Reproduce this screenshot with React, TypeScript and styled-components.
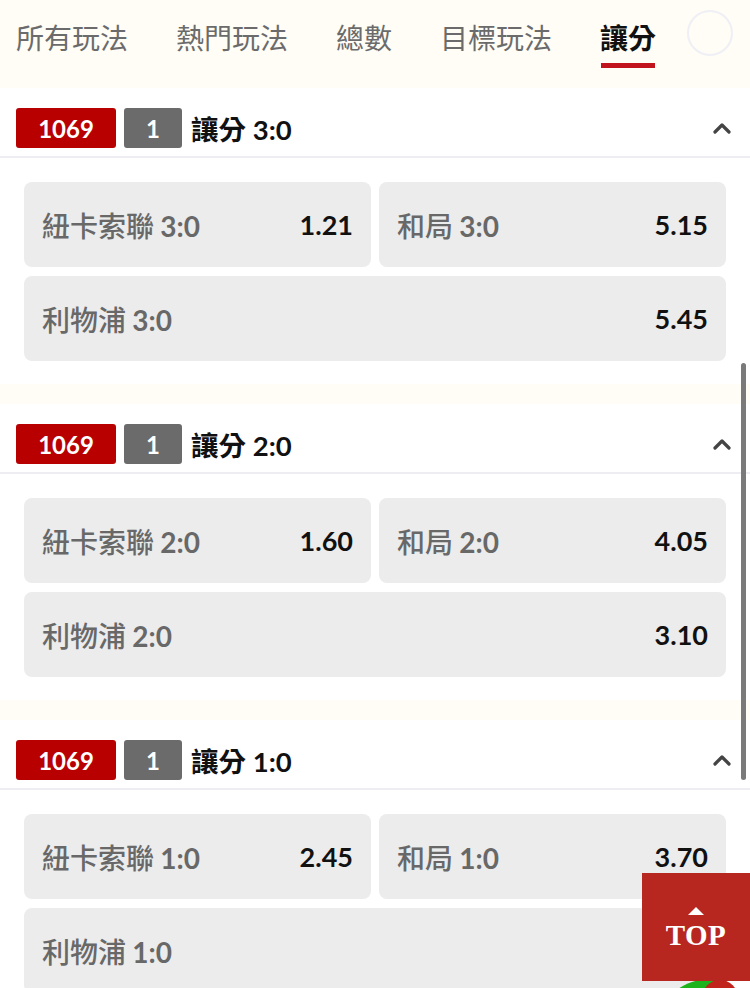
import styled, { createGlobalStyle } from "styled-components";

const GlobalStyle = createGlobalStyle`
  html, body {
    margin: 0;
    padding: 0;
    overflow: hidden;
    background: #fffdf5;
  }
  body {
    font-family: "Lato", "Noto Sans CJK TC", sans-serif;
  }
`;

const Page = styled.div`
  width: 750px;
  height: 988px;
  overflow: hidden;
  background: #fffdf5;
`;

const TabBar = styled.nav`
  height: 88px;
  display: flex;
  align-items: flex-start;
  gap: 48px;
  padding-left: 16px;
  box-sizing: border-box;
`;

const Tab = styled.div<{ $active?: boolean }>`
  display: flex;
  flex-direction: column;
  align-items: center;
  padding-top: 19px;
  font-family: "Noto Sans CJK TC", sans-serif;
  font-size: 28px;
  line-height: 36px;
  font-weight: ${(p) => (p.$active ? 700 : 400)};
  color: ${(p) => (p.$active ? "#111" : "#6b6b6b")};
  white-space: nowrap;
`;

const Underline = styled.span`
  width: 54px;
  height: 5px;
  margin-top: 8px;
  background: #c2141c;
`;

const FilterCircle = styled.div`
  width: 42px;
  height: 42px;
  margin-top: 10px;
  margin-left: -17px;
  border: 2px solid #efeff6;
  border-radius: 50%;
`;

const Section = styled.section`
  background: #fff;
  margin-bottom: 20px;
`;

const SectionHeader = styled.div`
  height: 70px;
  box-sizing: border-box;
  display: flex;
  align-items: center;
  padding: 19px 16px 7px 16px;
  border-bottom: 2px solid #eeeef2;
`;

const Badge = styled.span<{ $color: string; $width: number }>`
  display: inline-flex;
  align-items: center;
  justify-content: center;
  width: ${(p) => p.$width}px;
  height: 40px;
  border-radius: 3px;
  background: ${(p) => p.$color};
  color: #fff;
  font-family: "Lato", sans-serif;
  font-size: 24px;
  font-weight: 700;
  margin-right: 8px;
`;

const HeaderTitle = styled.span`
  margin-left: 1px;
  font-size: 27.5px;
  font-weight: 700;
  color: #111;
  flex: 1;
`;

const Chevron = styled.svg`
  width: 20px;
  height: 12px;
  margin-right: 2px;
`;

const OddsGrid = styled.div`
  display: grid;
  grid-template-columns: 1fr 1fr;
  column-gap: 8px;
  row-gap: 9px;
  padding: 24px 24px 23px;
`;

const Cell = styled.div<{ $wide?: boolean }>`
  grid-column: ${(p) => (p.$wide ? "1 / span 2" : "auto")};
  height: 85px;
  box-sizing: border-box;
  display: flex;
  align-items: center;
  justify-content: space-between;
  padding: 0 18px;
  background: #ececec;
  border-radius: 8px;
`;

const CellLabel = styled.span`
  font-family: "Noto Sans CJK TC", sans-serif;
  font-size: 28px;
  font-weight: 500;
  color: #686868;
`;

const Score = styled.span`
  font-family: "Lato", sans-serif;
  font-weight: 700;
`;

const CellOdds = styled.span`
  font-family: "Lato", sans-serif;
  font-size: 27px;
  font-weight: 700;
  color: #111;
`;

const ScrollThumb = styled.div`
  position: fixed;
  right: 4px;
  top: 363px;
  width: 5px;
  height: 417px;
  border-radius: 3px;
  background: #7a7a7a;
`;

const TopButton = styled.button`
  position: fixed;
  left: 642px;
  top: 873px;
  width: 108px;
  height: 108px;
  border: none;
  padding: 0;
  background: #b8271f;
  display: flex;
  flex-direction: column;
  align-items: center;
  justify-content: center;
  gap: 4px;
  z-index: 3;
  color: #fff;
  font-family: "Liberation Serif", serif;
  font-size: 29px;
  font-weight: 700;
  letter-spacing: 0.5px;
`;

const Arrow = styled.span`
  width: 0;
  height: 0;
  border-left: 8px solid transparent;
  border-right: 8px solid transparent;
  border-bottom: 8px solid #fff;
  margin-top: 4px;
`;

const FloatBall = styled.div<{ $color: string; $left: number; $size: number }>`
  position: fixed;
  left: ${(p) => p.$left}px;
  top: 980px;
  width: ${(p) => p.$size}px;
  height: ${(p) => p.$size}px;
  border-radius: 50%;
  background: ${(p) => p.$color};
  z-index: 2;
`;

const tabs = ["所有玩法", "熱門玩法", "總數", "目標玩法", "讓分"];

const markets = [
  { score: "3:0", home: "1.21", draw: "5.15", away: "5.45" },
  { score: "2:0", home: "1.60", draw: "4.05", away: "3.10" },
  { score: "1:0", home: "2.45", draw: "3.70", away: "" },
];

function App() {
  return (
    <Page>
      <GlobalStyle />
      <TabBar>
        {tabs.map((t) => (
          <Tab key={t} $active={t === "讓分"}>
            {t}
            {t === "讓分" && <Underline />}
          </Tab>
        ))}
        <FilterCircle />
      </TabBar>
      {markets.map((m) => (
        <Section key={m.score}>
          <SectionHeader>
            <Badge $color="#b90000" $width={100}>1069</Badge>
            <Badge $color="#6b6b6b" $width={58}>1</Badge>
            <HeaderTitle>讓分 {m.score}</HeaderTitle>
            <Chevron viewBox="0 0 20 12">
              <polyline
                points="3,10 10,3 17,10"
                fill="none"
                stroke="#444"
                strokeWidth="3.2"
                strokeLinecap="round"
                strokeLinejoin="round"
              />
            </Chevron>
          </SectionHeader>
          <OddsGrid>
            <Cell>
              <CellLabel>紐卡索聯 <Score>{m.score}</Score></CellLabel>
              <CellOdds>{m.home}</CellOdds>
            </Cell>
            <Cell>
              <CellLabel>和局 <Score>{m.score}</Score></CellLabel>
              <CellOdds>{m.draw}</CellOdds>
            </Cell>
            <Cell $wide>
              <CellLabel>利物浦 <Score>{m.score}</Score></CellLabel>
              <CellOdds>{m.away}</CellOdds>
            </Cell>
          </OddsGrid>
        </Section>
      ))}
      <ScrollThumb />
      <FloatBall $color="#1db31d" $left={660} $size={90} />
      <FloatBall $color="#c0241c" $left={702} $size={36} />
      <TopButton>
        <Arrow />
        TOP
      </TopButton>
    </Page>
  );
}

export default App;
